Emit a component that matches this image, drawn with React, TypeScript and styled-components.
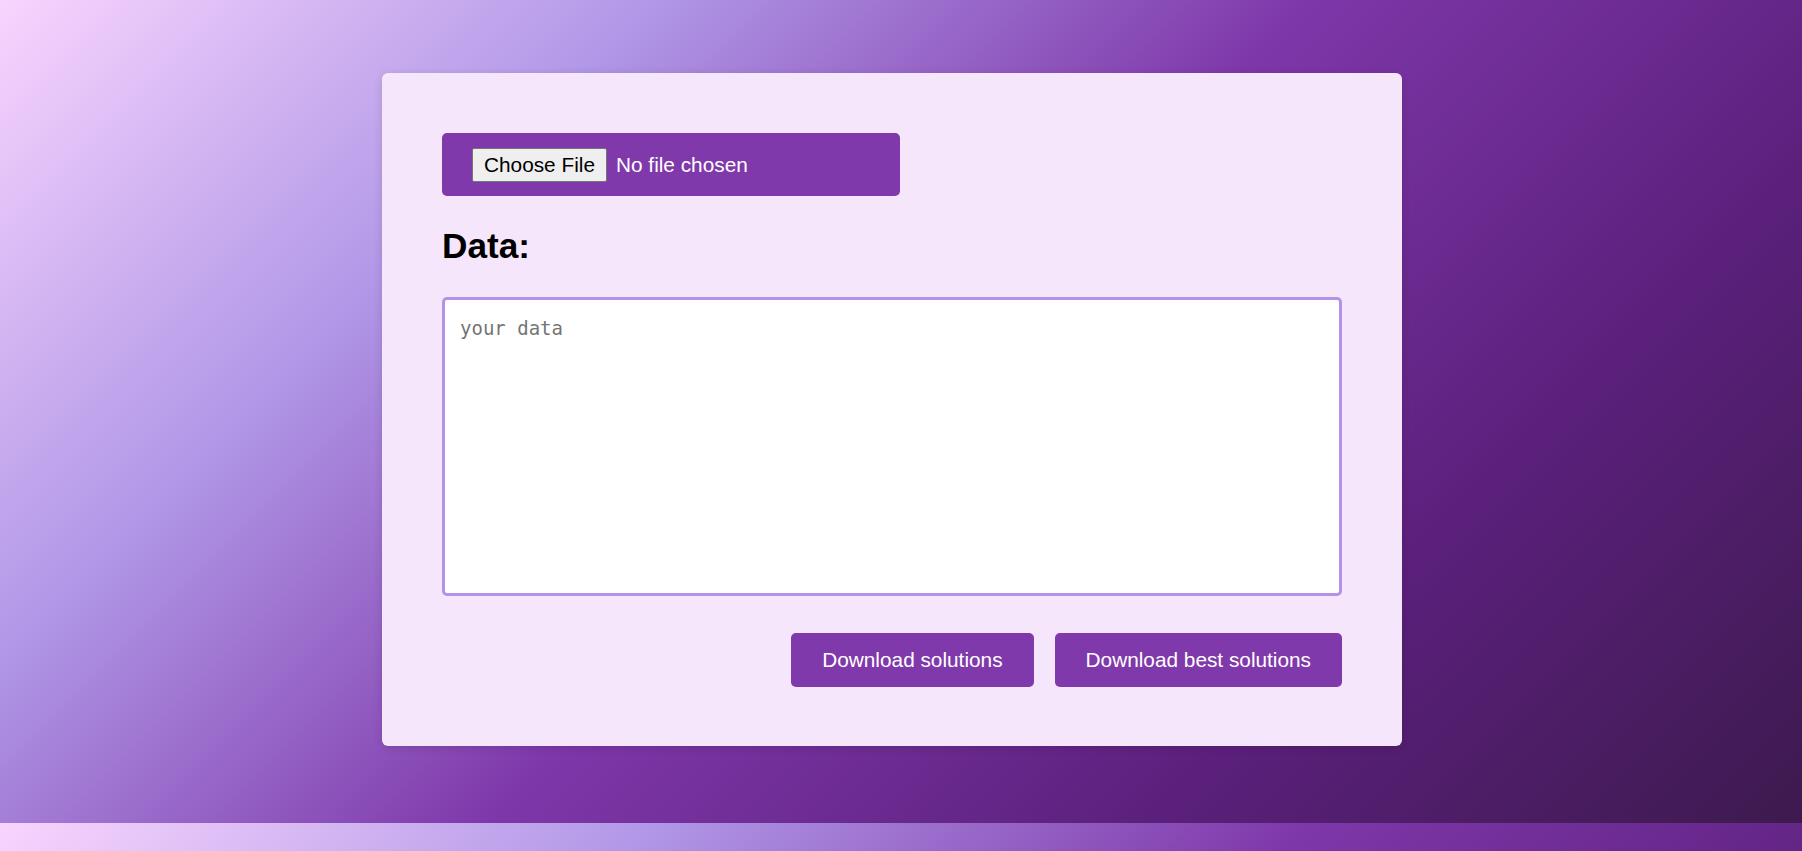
import styled, { createGlobalStyle } from 'styled-components'

const GlobalStyle = createGlobalStyle`
  html {
    background: linear-gradient(135deg, #f8d5fe 0%, #b197e7 25%, #7e37a9 50%, #5b207c 75%, #3d1a4e 100%);
  }

  body {
    margin: 0;
    font-family: 'Liberation Sans', Arial, sans-serif;
    background: transparent;
  }
`

const App = () => {
  return (
    <>
      <GlobalStyle />
      <Page>
        <Card>
          <UploadBar>
            <FileInput type="file" />
          </UploadBar>
          <Title>Data:</Title>
          <DataArea placeholder="your data" />
          <Actions>
            <ActionButton type="button">Download solutions</ActionButton>
            <ActionButton type="button">Download best solutions</ActionButton>
          </Actions>
        </Card>
      </Page>
    </>
  )
}

export default App

const Page = styled.main`
  box-sizing: border-box;
  height: 823px;
  padding: 73px 18px 76px 0;
  display: flex;
  justify-content: center;
  align-items: flex-start;
`

const Card = styled.section`
  box-sizing: border-box;
  width: 1020px;
  padding: 60px 60px 59px;
  background: #f5e6fc;
  border-radius: 6px;
  box-shadow: 0 2px 10px rgba(0, 0, 0, 0.12);
  display: flex;
  flex-direction: column;
`

const UploadBar = styled.div`
  box-sizing: border-box;
  width: 458px;
  height: 63px;
  padding: 0 30px;
  background: #7f39ab;
  border-radius: 5px;
  display: flex;
  align-items: center;
`

const FileInput = styled.input`
  font-family: 'Liberation Sans', Arial, sans-serif;
  font-size: 20.8px;
  color: #fff;

  &::file-selector-button {
    margin-right: 9px;
    padding: 4px 11px;
    border: 1px solid #767676;
    border-radius: 2px;
    background: #efefef;
    color: #000;
    font: inherit;
  }
`

const Title = styled.h2`
  margin: 30px 0 31px;
  font-size: 35.2px;
  font-weight: 700;
  color: #000;
`

const DataArea = styled.textarea`
  box-sizing: border-box;
  width: 900px;
  height: 299px;
  padding: 17px 15px;
  border: 3px solid #b393ea;
  border-radius: 5px;
  background: #fff;
  font-family: 'DejaVu Sans Mono', 'Liberation Mono', monospace;
  font-size: 19px;
  resize: none;
  outline: none;

  &::placeholder {
    color: #757575;
  }
`

const Actions = styled.div`
  margin-top: 37px;
  display: flex;
  justify-content: flex-end;
  gap: 21px;
`

const ActionButton = styled.button`
  height: 54px;
  padding: 0 31px;
  border: none;
  border-radius: 5px;
  background: #7f39ab;
  color: #fff;
  font-family: 'Liberation Sans', Arial, sans-serif;
  font-size: 20.8px;
  cursor: pointer;
`
